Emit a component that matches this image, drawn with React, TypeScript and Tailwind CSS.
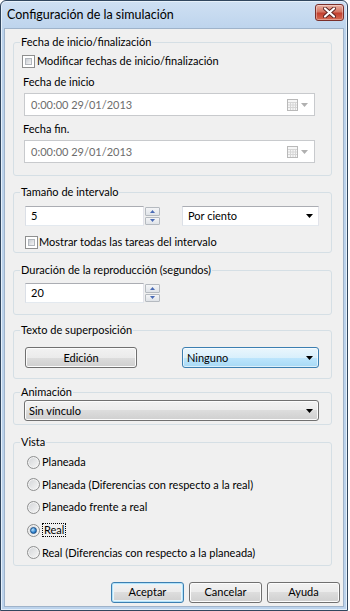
import type { ReactNode } from "react";

/* ── Win7 style bits ───────────────────────────── */
const textBox =
  "border border-t-[#abadb3] border-l-[#dbdfe6] border-r-[#e2e3ea] border-b-[#e3e9ef] bg-white";
const grayBtn =
  "rounded-[3px] border border-[#707070] bg-[linear-gradient(#f2f2f2_0%,#ebebeb_50%,#dddddd_50%,#cfcfcf_100%)] shadow-[inset_0_0_0_1px_#fcfcfc]";

function Group({ title, className, children }: { title: string; className?: string; children: ReactNode }) {
  return (
    <fieldset className={`w-[319px] rounded-[3px] border border-[#d5dfe5] ${className ?? ""}`}>
      <legend className="ml-[6px] px-[1px] leading-[14px]">{title}</legend>
      {children}
    </fieldset>
  );
}

function CheckBox() {
  return (
    <span className="block h-[13px] w-[13px] shrink-0 border border-[#8e8f8f] bg-white p-[2px]">
      <span className="block h-full w-full border border-[#b2b7bd] bg-[linear-gradient(135deg,#c9cdd2,#f4f4f5)]" />
    </span>
  );
}

function Radio({ checked }: { checked?: boolean }) {
  return (
    <span className="flex h-[13px] w-[13px] shrink-0 items-center justify-center rounded-full border border-[#8e8f8f] bg-[linear-gradient(135deg,#d2d4d7,#f7f7f7)] shadow-[inset_0_0_0_1px_#f4f4f4]">
      {checked && (
        <span className="block h-[7px] w-[7px] rounded-full border border-[#1b4f87] bg-[radial-gradient(circle_at_35%_35%,#b8e2fb,#2d82d0_60%,#18518f)]" />
      )}
    </span>
  );
}

function DropArrow({ color = "#000" }: { color?: string }) {
  return (
    <svg width="7" height="4" viewBox="0 0 7 4">
      <path d="M0 0H7L3.5 4Z" fill={color} />
    </svg>
  );
}

function Spinner() {
  return (
    <div className="flex h-[20px] w-[17px] flex-col gap-[1px] p-[1px]">
      {[0, 1].map((i) => (
        <div
          key={i}
          className="flex flex-1 items-center justify-center rounded-[1px] border border-[#b5bac0] bg-[linear-gradient(#f4f5f7,#dfe3e8)]"
        >
          <svg width="5" height="3" viewBox="0 0 5 3">
            <path d={i === 0 ? "M0 3L2.5 0L5 3Z" : "M0 0H5L2.5 3Z"} fill="#4a6bb5" />
          </svg>
        </div>
      ))}
    </div>
  );
}

function CalIcon() {
  return (
    <svg width="11" height="12" viewBox="0 0 11 12">
      <rect x="0.5" y="0.5" width="10" height="11" fill="#f6f6f6" stroke="#b9b9b9" />
      <path d="M1 3.5H10M1 6H10M1 8.5H10M3.5 3V11M6 3V11M8.5 3V11" stroke="#d6d6d6" />
    </svg>
  );
}

function DateField({ className }: { className?: string }) {
  return (
    <div
      className={`ml-[10px] flex h-[23px] w-[291px] items-center border border-[#c8cacd] bg-white pl-[6px] pr-[6px] text-[#6d6d6d] ${className ?? ""}`}
    >
      <span className="flex-1">0:00:00 29/01/2013</span>
      <CalIcon />
      <span className="ml-[3px]">
        <DropArrow color="#b0b0b0" />
      </span>
    </div>
  );
}

function NumberBox({ value }: { value: string }) {
  return (
    <div className="ml-[11px] flex h-[20px]">
      <div className={`flex w-[119px] items-center pl-[5px] ${textBox}`}>{value}</div>
      <Spinner />
    </div>
  );
}

const views = [
  "Planeada",
  "Planeada (Diferencias con respecto a la real)",
  "Planeado frente a real",
  "Real",
  "Real (Diferencias con respecto a la planeada)",
];

export default function App() {
  return (
    <div className="h-[611px] w-[350px] bg-white font-['Segoe_UI','Lato',sans-serif] text-[11px] leading-[14px] text-black">
      <div className="flex h-[611px] w-[348px] flex-col rounded-t-[6px] border border-[#31465e] bg-[linear-gradient(#cfe0f3,#bcd3ec_30px,#bcd3ec)] shadow-[inset_0_0_0_1px_#e6f0fa]">
        {/* Title bar */}
        <div className="flex h-[27px] shrink-0 items-center pl-[6px] pr-[3px]">
          <span className="flex-1 text-[12.5px] leading-[16px]">Configuración de la simulación</span>
          <div className="mb-[4px] flex h-[17px] w-[29px] items-center justify-center rounded-[3px] border border-[#7a2f2a] bg-[linear-gradient(#eab1a4,#d47764_45%,#c2402f_55%,#d66b52)] shadow-[inset_0_0_0_1px_rgba(255,255,255,0.35)]">
            <svg width="13" height="11" viewBox="0 0 13 11">
              <path d="M2 1.5L11 9.5M11 1.5L2 9.5" stroke="#5b2320" strokeWidth="4" strokeLinecap="round" />
              <path d="M2 1.5L11 9.5M11 1.5L2 9.5" stroke="#fff" strokeWidth="2.2" strokeLinecap="round" />
            </svg>
          </div>
        </div>

        {/* Client area */}
        <div className="mx-[3px] mb-[3px] flex flex-1 flex-col border border-[#9fb3ca] bg-[#f0f0f0] pl-[8px]">
          <Group title="Fecha de inicio/finalización" className="mt-[6px] pb-[12px]">
            <label className="ml-[8px] mt-[5px] flex h-[14px] items-center gap-[2px]">
              <CheckBox />
              <span>Modificar fechas de inicio/finalización</span>
            </label>
            <div className="ml-[9px] mt-[7px]">Fecha de inicio</div>
            <DateField className="mt-[4px]" />
            <div className="ml-[9px] mt-[6px]">Fecha fin.</div>
            <DateField className="mt-[4px]" />
          </Group>

          <Group title="Tamaño de intervalo" className="mt-[9px] pb-[3px]">
            <div className="mt-[7px] flex">
              <NumberBox value="5" />
              <div className={`ml-[21px] flex h-[20px] w-[137px] items-center pl-[5px] pr-[5px] ${textBox}`}>
                <span className="flex-1">Por ciento</span>
                <DropArrow />
              </div>
            </div>
            <label className="ml-[11px] mt-[9px] flex h-[14px] items-center gap-[1px]">
              <CheckBox />
              <span>Mostrar todas las tareas del intervalo</span>
            </label>
          </Group>

          <Group title="Duración de la reproducción (segundos)" className="mt-[10px] pb-[11px]">
            <div className="mt-[6px]">
              <NumberBox value="20" />
            </div>
          </Group>

          <Group title="Texto de superposición" className="mt-[8px] pb-[10px]">
            <div className="mt-[10px] flex">
              <button className={`ml-[11px] h-[21px] w-[112px] ${grayBtn}`}>Edición</button>
              <div className="ml-[45px] flex h-[21px] w-[137px] items-center rounded-[3px] border border-[#3c7fb1] bg-[linear-gradient(#eaf6fd_0%,#d9f0fc_50%,#bee6fd_50%,#a7d9f5_100%)] pl-[4px] pr-[5px] shadow-[inset_0_0_0_1px_rgba(255,255,255,0.6)]">
                <span className="flex-1">Ninguno</span>
                <DropArrow />
              </div>
            </div>
          </Group>

          <Group title="Animación" className="mt-[6px] pb-[3px]">
            <div className={`ml-[10px] mt-[1px] flex h-[21px] w-[295px] items-center pl-[4px] pr-[5px] ${grayBtn}`}>
              <span className="flex-1">Sin vínculo</span>
              <DropArrow />
            </div>
          </Group>

          <Group title="Vista" className="mt-[10px] pb-[5px]">
            <div className="ml-[13px] mt-[6px] flex flex-col gap-[8.7px]">
              {views.map((v) => (
                <label key={v} className="flex h-[14px] items-center gap-[2px]">
                  <Radio checked={v === "Real"} />
                  <span className={v === "Real" ? "border border-dotted border-black px-[1px] leading-[12px]" : ""}>{v}</span>
                </label>
              ))}
            </div>
          </Group>

          <div className="mt-[16px] flex w-[327px] justify-end gap-[5px]">
            <button className="h-[21px] w-[73px] rounded-[3px] border border-[#3c7fb1] bg-[linear-gradient(#f2f2f2_0%,#ebebeb_50%,#dddddd_50%,#cfcfcf_100%)] shadow-[inset_0_0_0_1px_#b4e2f8,inset_0_0_0_2px_#e6f5fc]">
              Aceptar
            </button>
            <button className={`h-[21px] w-[73px] ${grayBtn}`}>Cancelar</button>
            <button className={`h-[21px] w-[73px] ${grayBtn}`}>Ayuda</button>
          </div>
        </div>
      </div>
    </div>
  );
}
